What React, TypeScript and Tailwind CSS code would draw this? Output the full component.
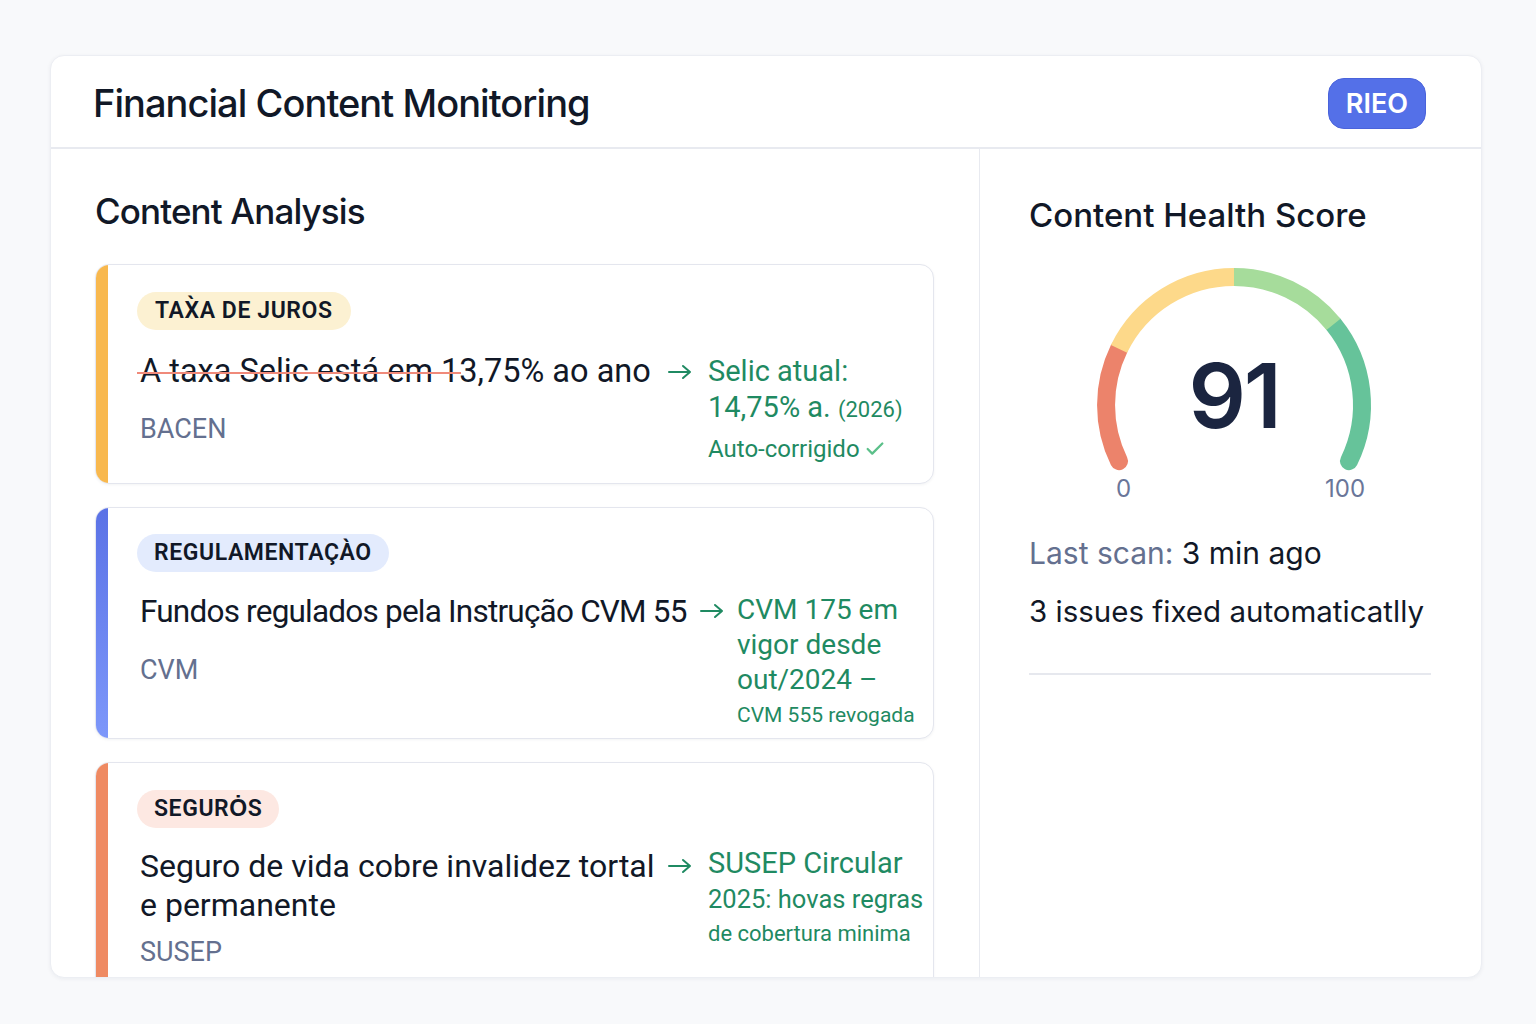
import { Check } from "lucide-react";

function Arrow({ className }: { className: string }) {
  return (
    <svg width="24" height="16" viewBox="0 0 24 16" fill="none" className={`shrink-0 ${className}`}>
      <path d="M1 8 H22 M15 2 L22 8 L15 14" stroke="#1f8a62" strokeWidth="2" strokeLinecap="round" strokeLinejoin="round" />
    </svg>
  );
}

function Gauge() {
  return (
    <div className="relative ml-[55px] mt-[28px] h-[240px] w-[300px]">
      <svg width="300" height="220" viewBox="0 0 300 220" fill="none">
        <path d="M35 196.1 A128 128 0 0 1 35 83.9" stroke="#ec836b" strokeWidth="18" strokeLinecap="round" />
        <path d="M249.5 59.4 A128 128 0 0 1 265 196.1" stroke="#66c39a" strokeWidth="18" strokeLinecap="round" />
        <path d="M35 83.9 A128 128 0 0 1 150 12" stroke="#fdd98a" strokeWidth="18" />
        <path d="M150 12 A128 128 0 0 1 249.5 59.4" stroke="#a6dc9b" strokeWidth="18" />
      </svg>
      <div className="absolute left-0 right-0 top-[86px] text-center text-[90px] font-semibold leading-none tracking-tight text-[#1b2540]">
        91
      </div>
      <span className="absolute left-[32px] top-[212px] text-[24px] leading-none text-[#6a7699]">0</span>
      <span className="absolute left-[241px] top-[212px] text-[24px] leading-none text-[#6a7699]">100</span>
    </div>
  );
}

export default function App() {
  const green = "text-[#1f8a62]";
  return (
    <div className="min-h-screen bg-[#f8f9fb] pt-[55px] pl-[50px] pr-[54px]" style={{ fontFamily: "Roboto, 'Liberation Sans', sans-serif" }}>
      <div className="h-[923px] overflow-hidden rounded-[14px] border border-[#eceef3] bg-white shadow-[0_1px_4px_rgba(20,30,60,0.06)] flex flex-col">
        <div className="flex h-[93px] shrink-0 items-center justify-between border-b-2 border-[#e8eaf0] pl-[42px] pr-[55px]" style={{ fontFamily: "Inter, sans-serif" }}>
          <h1 className="pt-1 text-[38px] font-medium tracking-tight text-[#111827]">Financial Content Monitoring</h1>
          <span className="mt-[3px] rounded-[16px] border border-[#4a63db] bg-[#5470e8] px-[17px] py-[6px] text-[27px] font-semibold leading-[37px] text-white">
            RIEO
          </span>
        </div>

        <div className="flex flex-1 min-h-0">
          <div className="w-[929px] shrink-0 border-r border-[#e8eaf0] pl-[44px] pr-[45px] pt-[40px]">
            <h2 className="text-[35px] font-medium leading-[44px] tracking-tight text-[#111827]" style={{ fontFamily: "Inter, sans-serif" }}>
              Content Analysis
            </h2>

            <div className="mt-[31px] flex flex-col gap-[23px]">
              {/* card 1 */}
              <div className="flex h-[220px] overflow-hidden rounded-[14px] border border-[#e4e6ee] bg-white shadow-[0_1px_3px_rgba(20,30,60,0.05)]">
                <div className="w-3 shrink-0 bg-[#f8b84e]" />
                <div className="flex-1 pl-[29px] pt-[27px]">
                  <span className="inline-block rounded-full bg-[#fcf1d2] px-[18px] py-[6px] text-[23px] font-semibold leading-[26px] tracking-wide text-[#111827]">
                    TAX̀A DE JUROS
                  </span>
                  <div className="mt-[22px] flex pl-[3px]">
                    <div className="w-[515px] shrink-0">
                      <p className="text-[32.5px] leading-[38px] text-[#111827]">
                        <span className="relative">
                          A taxa Selic está em 1
                          <span className="absolute left-[-3px] right-[-2px] top-[20px] h-[2px] bg-[#f08a7a]" />
                        </span>
                        3,75% ao ano
                      </p>
                      <p className="mt-[23px] text-[27px] leading-[32px] text-[#64708f]">BACEN</p>
                    </div>
                    <Arrow className="ml-[13px] mr-[16px] mt-[12px]" />
                    <div className={green}>
                      <p className="text-[29px] leading-[38px]">Selic atual:</p>
                      <p className="text-[29px] leading-[34px]">
                        14,75% a. <span className="text-[22px]">(2026)</span>
                      </p>
                      <p className="mt-[7px] flex items-center gap-1 text-[24px] leading-[30px]">
                        Auto-corrigido <Check size={22} strokeWidth={2.5} className="text-[#5cc08a]" />
                      </p>
                    </div>
                  </div>
                </div>
              </div>

              {/* card 2 */}
              <div className="flex h-[232px] overflow-hidden rounded-[14px] border border-[#e4e6ee] bg-white shadow-[0_1px_3px_rgba(20,30,60,0.05)]">
                <div className="w-3 shrink-0 bg-gradient-to-b from-[#5b72e6] to-[#7d97fa]" />
                <div className="flex-1 pl-[29px] pt-[26px]">
                  <span className="inline-block rounded-full bg-[#e3ebfd] px-[17px] py-[6px] text-[23px] font-semibold leading-[26px] tracking-wide text-[#111827]">
                    REGULAMENTAÇÀO
                  </span>
                  <div className="mt-[21px] flex pl-[3px]">
                    <div className="w-[550px] shrink-0">
                      <p className="whitespace-nowrap text-[31.5px] leading-[38px] tracking-tight text-[#111827]">Fundos regulados pela Instrução CVM 55</p>
                      <p className="mt-[23px] text-[27px] leading-[32px] text-[#64708f]">CVM</p>
                    </div>
                    <Arrow className="ml-[10px] mr-[13px] mt-[10px]" />
                    <div className={green}>
                      <p className="text-[28px] leading-[34px]">CVM 175 em</p>
                      <p className="text-[28px] leading-[36px]">vigor desde</p>
                      <p className="text-[28px] leading-[34px]">out/2024 –</p>
                      <p className="text-[21px] leading-[36px]">CVM 555 revogada</p>
                    </div>
                  </div>
                </div>
              </div>

              {/* card 3 */}
              <div className="flex h-[240px] shrink-0 overflow-hidden rounded-[14px] border border-[#e4e6ee] bg-white shadow-[0_1px_3px_rgba(20,30,60,0.05)]">
                <div className="w-3 shrink-0 bg-[#ef8a62]" />
                <div className="flex-1 pl-[29px] pt-[27px]">
                  <span className="inline-block rounded-full bg-[#fde8e2] px-[17px] py-[6px] text-[23px] font-semibold leading-[26px] tracking-wide text-[#111827]">
                    SEGURȮS
                  </span>
                  <div className="mt-[19px] flex pl-[3px]">
                    <div className="w-[515px] shrink-0">
                      <p className="text-[32px] leading-[39px] text-[#111827]">Seguro de vida cobre invalidez tortal e permanente</p>
                      <p className="mt-[11px] text-[27px] leading-[32px] text-[#64708f]">SUSEP</p>
                    </div>
                    <Arrow className="ml-[13px] mr-[16px] mt-[11px]" />
                    <div className={green}>
                      <p className="text-[29px] leading-[32px]">SUSEP Circular</p>
                      <p className="text-[25.5px] leading-[40px]">2025: hovas regras</p>
                      <p className="text-[22px] leading-[30px]">de cobertura minima</p>
                    </div>
                  </div>
                </div>
              </div>
            </div>
          </div>

          <div className="flex-1 pl-[49px] pr-[50px] pt-[44px]" style={{ fontFamily: "Inter, sans-serif" }}>
            <h2 className="text-[33px] font-medium leading-[44px] text-[#111827]">Content Health Score</h2>
            <Gauge />
            <p className="mt-[28px] text-[30px] leading-[40px] text-[#111827]">
              <span className="text-[#64708f]">Last scan:</span> 3 min ago
            </p>
            <p className="mt-[18px] text-[29.5px] leading-[40px] text-[#111827]">3 issues fixed automaticatlly</p>
            <div className="mt-[42px] h-[2px] bg-[#e6e8ee]" />
          </div>
        </div>
      </div>
    </div>
  );
}
